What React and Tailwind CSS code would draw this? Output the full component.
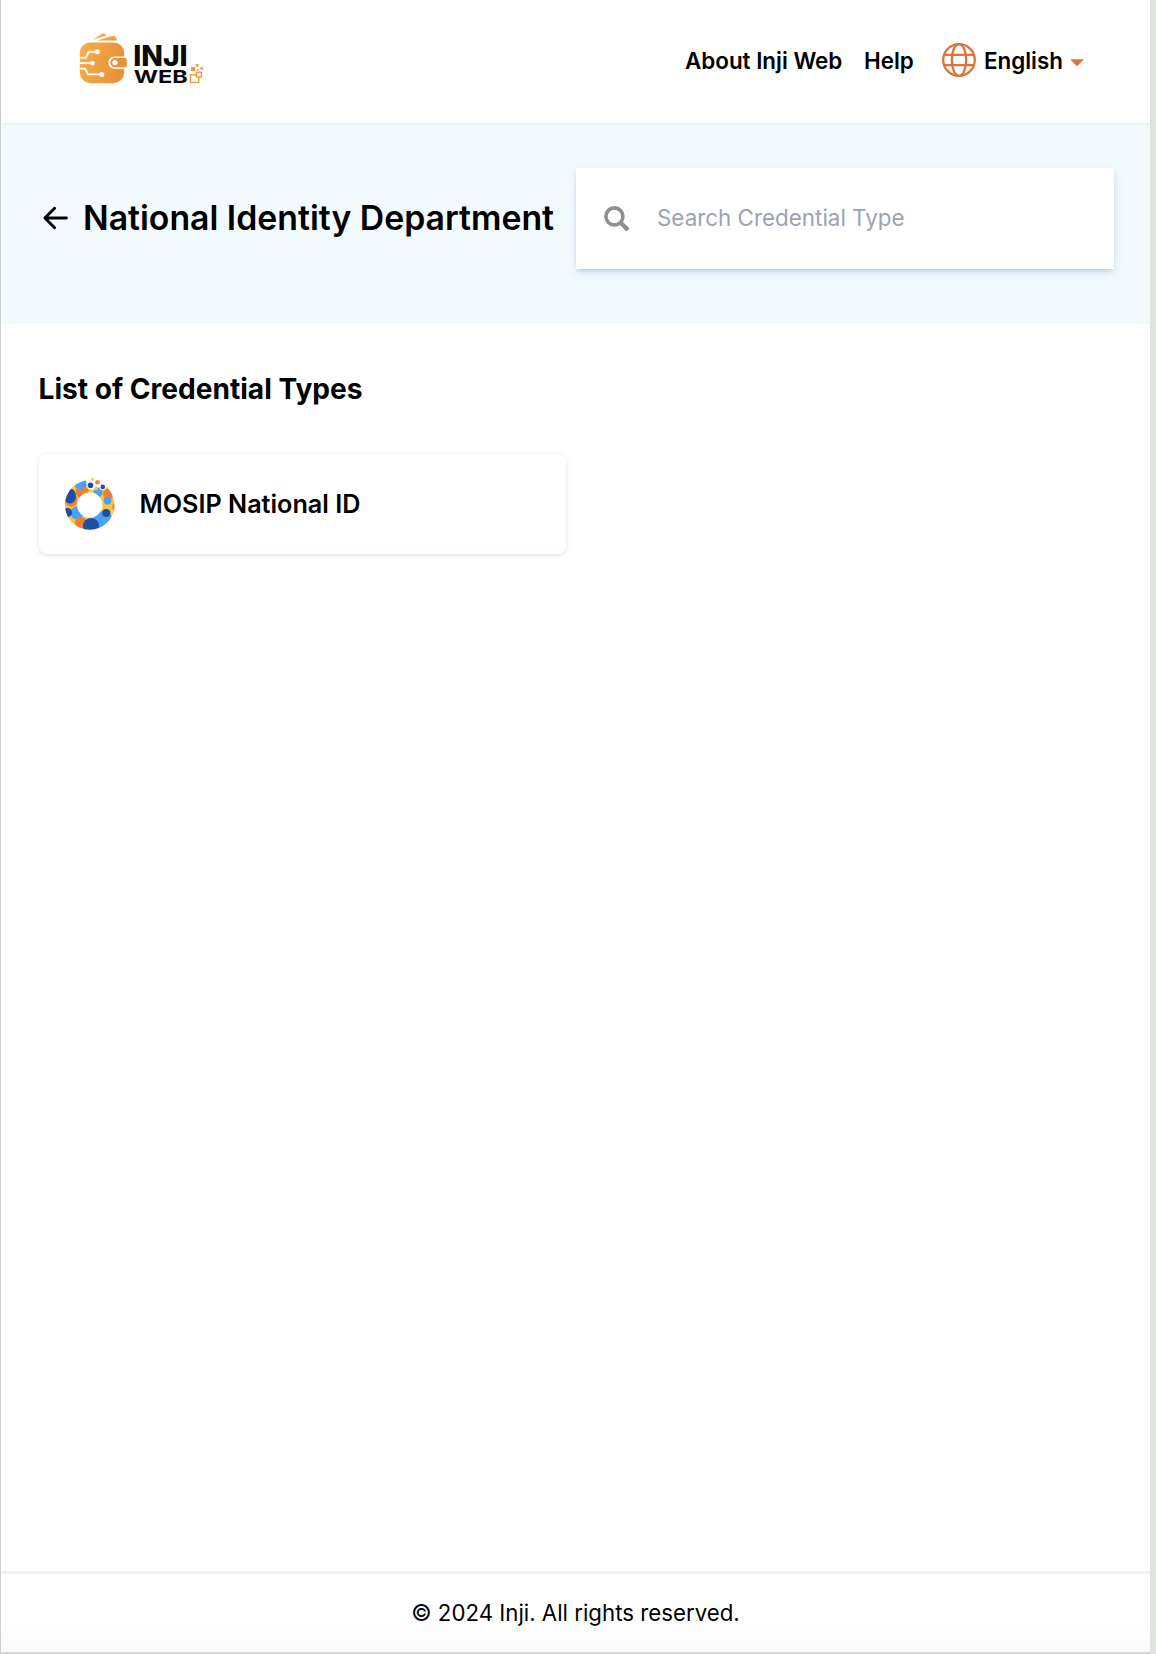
import React from 'react';

function InjiLogo() {
  return (
    <svg width="150" height="80" viewBox="0 0 150 80" className="block shrink-0" aria-label="Inji Web">
      <defs>
        <linearGradient id="wallet" x1="0" y1="0" x2="1" y2="0.25">
          <stop offset="0" stopColor="#f4b04a" />
          <stop offset="1" stopColor="#e8923a" />
        </linearGradient>
      </defs>
      <path d="M23 19.8 L32 13.8 Q34.3 12.6 35.6 14.4 L36.3 15.6 Z" fill="#f2ab46" />
      <path d="M27 20.6 L41 16.3 Q45 15 46.3 18 L47 20.6 Z" fill="#efa443" />
      <rect x="9.8" y="22.4" width="44.4" height="40.8" rx="10.5" fill="url(#wallet)" />
      <g fill="none" stroke="#fff" strokeWidth="1.9">
        <path d="M9 37.6 H16 L18.6 31.8 H26" />
        <path d="M9 43.1 H21" />
        <path d="M9 48.6 H15 L18 54.4 H30" />
      </g>
      <circle cx="27.4" cy="31.8" r="2.5" fill="#fff" />
      <circle cx="22.4" cy="43.1" r="2.4" fill="#fff" />
      <circle cx="31.8" cy="54.4" r="2.5" fill="#fff" />
      <path d="M54.5 36.4 H44.5 A6.2 6.2 0 0 0 44.5 48.8 H54.5" fill="#fff" />
      <path d="M55 37.9 H45 A4.7 4.7 0 0 0 45 47.3 H55 Q56.8 47.3 56.8 45.5 V39.7 Q56.8 37.9 55 37.9 Z" fill="#e99339" />
      <circle cx="44.9" cy="42.6" r="2.6" fill="#fff" />
      <g fill="#0a0a0a" fontFamily="Inter, sans-serif">
        <text x="63.2" y="45.8" fontSize="28" fontWeight="800" textLength="54.5" lengthAdjust="spacingAndGlyphs">INJI</text>
        <text x="63.7" y="63" fontSize="17.6" fontWeight="700" textLength="54" lengthAdjust="spacingAndGlyphs">WEB</text>
      </g>
      <g fill="none" stroke="#ee9c42" strokeWidth="1.4">
        <rect x="120.4" y="54.8" width="8.4" height="7.6" />
        <rect x="126.4" y="52.2" width="5" height="4.8" fill="#fff" />
      </g>
      <g fill="#ee9c42">
        <rect x="121" y="47" width="4.4" height="4" />
        <rect x="125.6" y="44" width="2.8" height="2.6" />
        <rect x="130.4" y="47" width="2.6" height="2.6" />
        <rect x="127" y="49" width="1.6" height="1.6" />
      </g>
    </svg>
  );
}

function Globe() {
  return (
    <svg width="36" height="36" viewBox="0 0 36 36" fill="none" stroke="#dc743c" strokeWidth="2.3" className="block shrink-0">
      <circle cx="18" cy="18" r="15.8" />
      <ellipse cx="18" cy="18" rx="7.2" ry="15.8" />
      <path d="M3.2 12.8 H32.8 M3.2 23.2 H32.8" />
    </svg>
  );
}

function MosipRing() {
  return (
    <svg width="80" height="80" viewBox="0 0 80 80" className="block shrink-0">
      <defs>
        <clipPath id="ring">
          <path clipRule="evenodd" d="M14 40 a24.7 24.7 0 1 0 49.4 0 a24.7 24.7 0 1 0 -49.4 0 Z M26 40 a12.7 12.7 0 1 1 25.4 0 a12.7 12.7 0 1 1 -25.4 0 Z" />
        </clipPath>
      </defs>
      <g clipPath="url(#ring)">
        <rect x="12" y="12" width="56" height="56" fill="#f7c443" />
        <circle cx="31" cy="27" r="6.5" fill="#ee7f35" />
        <circle cx="20" cy="35" r="6.5" fill="#ee7f35" />
        <circle cx="29.5" cy="17.5" r="6.7" fill="#48a2f8" />
        <ellipse cx="19" cy="31" rx="6" ry="7.5" fill="#1c4fab" />
        <circle cx="26" cy="48" r="6.5" fill="#48a2f8" />
        <circle cx="16.5" cy="47.5" r="4.6" fill="#1c4fab" />
        <circle cx="30" cy="58" r="6" fill="#ee7f35" />
        <circle cx="52" cy="56" r="10" fill="#48a2f8" />
        <circle cx="40" cy="61" r="8" fill="#1c4fab" />
        <circle cx="55.3" cy="48" r="4" fill="#1c4fab" />
        <ellipse cx="57" cy="29" rx="5" ry="5.6" fill="#ee7f35" />
        <circle cx="56.6" cy="35.6" r="3.9" fill="#48a2f8" />
        <circle cx="47" cy="27.5" r="4.5" fill="#48a2f8" />
        <circle cx="65" cy="42" r="3.8" fill="#ee7f35" />
      </g>
      <path d="M35.4 13 H58 L50.8 22.6 Q47.5 20.6 45.6 23.3 Q42 26 37 23.2 Q34.4 20 35.4 13 Z" fill="#fff" />
      <circle cx="39.5" cy="20.2" r="2.8" fill="#1c4fab" />
      <circle cx="46.5" cy="17.2" r="2.3" fill="#ee7f35" />
      <circle cx="51.8" cy="21.9" r="3.2" fill="#fff" />
      <circle cx="51.8" cy="21.9" r="2.3" fill="#1c4fab" />
      <circle cx="45" cy="23.6" r="2" fill="#f7c443" />
      <circle cx="41.5" cy="14.4" r="1.3" fill="#f7c443" />
    </svg>
  );
}

function Header() {
  return (
    <header className="relative flex h-[123px] shrink-0 items-start justify-between bg-white pl-[69px] pr-[65px] shadow-[0_1px_2px_rgba(0,0,0,0.07)]">
      <div className="pt-5">
        <InjiLogo />
      </div>
      <nav className="flex h-[122px] items-center text-[22.4px] font-semibold text-black">
        <a className="w-[157px] whitespace-nowrap">About Inji Web</a>
        <a className="ml-[22px] w-[51px] whitespace-nowrap">Help</a>
        <div className="ml-[26px] flex items-center">
          <div className="pb-[2px]">
            <Globe />
          </div>
          <span className="ml-[7px] w-[79px] whitespace-nowrap">English</span>
          <svg width="14" height="8" viewBox="0 0 14 8" className="ml-[7px] mr-px mt-[3px] block">
            <path d="M0 0.3 H14 L7 7.3 Z" fill="#dc743c" />
          </svg>
        </div>
      </nav>
    </header>
  );
}

function SearchBanner() {
  return (
    <section className="flex h-[201px] shrink-0 items-start bg-[#f2fafe] pl-[41px] pr-9 pt-[45px]">
      <div className="flex h-[101px] w-[534px] items-center">
        <svg width="26" height="24" viewBox="0 0 26 24" fill="none" stroke="#000" strokeWidth="2.9" strokeLinecap="round" strokeLinejoin="round" className="mb-px block">
          <path d="M24.4 12 H3.2 M12.6 2.2 L2.9 12 L12.6 21.8" />
        </svg>
        <h1 className="ml-[15px] whitespace-nowrap pb-[2px] text-[33.8px] font-semibold leading-none">National Identity Department</h1>
      </div>
      <label className="flex h-[101px] flex-1 items-center bg-white pl-7 shadow-[0_4px_9px_-1px_rgba(85,125,175,0.26),0_2px_4px_-2px_rgba(85,125,175,0.35)]">
        <svg width="26" height="26" viewBox="0 0 26 26" fill="none" stroke="#8f8f8f" className="block">
          <circle cx="10.4" cy="10.4" r="8.5" strokeWidth="3.6" />
          <path d="M16.7 16.7 L24 24" strokeWidth="4.4" />
        </svg>
        <input
          className="ml-[27px] min-w-0 flex-1 bg-transparent pb-px text-[22.4px] outline-none placeholder:text-[#9ca3af]"
          placeholder="Search Credential Type"
        />
      </label>
    </section>
  );
}

function CredentialCard() {
  return (
    <article className="mt-[45px] flex h-[100px] w-[527px] items-center rounded-lg bg-white pl-[12px] pt-[2px] shadow-[0_1px_4px_rgba(110,120,190,0.26)]">
      <MosipRing />
      <h3 className="ml-[9px] whitespace-nowrap pb-px text-[25.2px] font-semibold">MOSIP National ID</h3>
    </article>
  );
}

export default function App() {
  return (
    <div className="flex h-[1654px] w-[1156px] bg-[#dfe5da] font-['Inter',sans-serif] text-black">
      <div className="flex w-[1150px] flex-col border-b-2 border-l border-b-[#d6d6d6] border-l-[#d0d0d0] bg-white">
        <Header />
        <SearchBanner />
        <main className="flex-1 pl-[37.5px] pt-[45px]">
          <h2 className="text-[28.1px] font-bold leading-10">List of Credential Types</h2>
          <CredentialCard />
        </main>
        <footer className="flex h-[81px] shrink-0 items-center justify-center border-t-[3px] border-[#eef0f6] bg-linear-to-b from-white from-60% to-[#fafafa] text-[22.25px]">
          © 2024 Inji. All rights reserved.
        </footer>
      </div>
    </div>
  );
}
